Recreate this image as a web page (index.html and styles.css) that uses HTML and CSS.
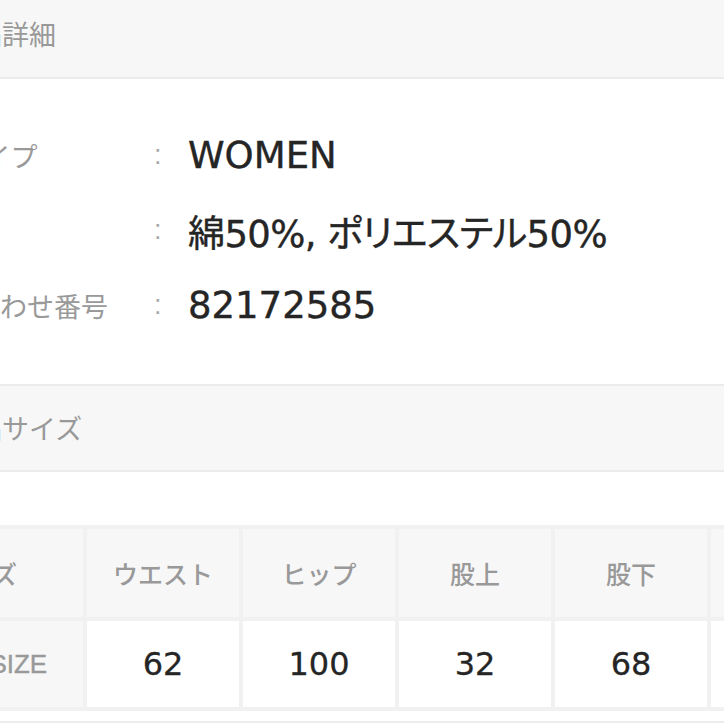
FILE: index.html
```html
<!DOCTYPE html>
<html lang="ja">
<head>
<meta charset="utf-8">
<title>商品詳細</title>
<link rel="stylesheet" href="styles.css">
</head>
<body>
<div class="page">
  <div class="sec-head sec-head--top">商品詳細</div>

  <dl class="spec">
    <div class="spec-row">
      <dt class="spec-label">ITEMタイプ</dt>
      <dd class="spec-colon">:</dd>
      <dd class="spec-value">WOMEN</dd>
    </div>
    <div class="spec-row">
      <dt class="spec-label">素材</dt>
      <dd class="spec-colon">:</dd>
      <dd class="spec-value spec-value--mixed">綿50%, ポリエステル50%</dd>
    </div>
    <div class="spec-row">
      <dt class="spec-label">お問い合わせ番号</dt>
      <dd class="spec-colon">:</dd>
      <dd class="spec-value">82172585</dd>
    </div>
  </dl>

  <div class="sec-head sec-head--boxed">商品サイズ</div>

  <table class="size-table">
    <thead>
      <tr>
        <th class="size-first">サイズ</th>
        <th>ウエスト</th>
        <th>ヒップ</th>
        <th>股上</th>
        <th>股下</th>
        <th>裾幅</th>
      </tr>
    </thead>
    <tbody>
      <tr>
        <td class="size-first size-name">FREE SIZE</td>
        <td>62</td>
        <td>100</td>
        <td>32</td>
        <td>68</td>
        <td>20</td>
      </tr>
    </tbody>
  </table>

  <div class="next-sec"></div>
</div>
</body>
</html>
```

FILE: styles.css
```css
html, body {
  margin: 0;
  padding: 0;
  background: #ffffff;
}

body {
  width: 724px;
  height: 724px;
  overflow: hidden;
  font-family: "Liberation Sans", "Noto Sans CJK JP", sans-serif;
}

.page {
  margin-left: -130px;
  width: 1000px;
}

.sec-head {
  background: #f7f7f7;
  color: #999999;
  font-family: "Noto Sans CJK JP", sans-serif;
  font-size: 27px;
  padding-left: 78px;
}

.sec-head--top {
  padding-top: 14px;
  padding-bottom: 23px;
  line-height: 40px;
  border-bottom: 2px solid #ececec;
}

.sec-head--boxed {
  margin-top: 41px;
  line-height: 84px;
  border-top: 2px solid #ececec;
  border-bottom: 2px solid #ececec;
}

.spec {
  margin: 0;
  padding: 39px 0 0 22px;
}

.spec-row {
  display: grid;
  grid-template-columns: 262px 34px 1fr;
  align-items: center;
  height: 75px;
}

.spec-label {
  color: #999999;
  font-size: 27px;
  white-space: nowrap;
}

.spec-colon {
  margin: 0;
  color: #a8a8a8;
  font-size: 27px;
}

.spec-value {
  margin: 0;
  color: #252525;
  font-family: "DejaVu Sans", "Noto Sans CJK JP", sans-serif;
  font-size: 37px;
  font-feature-settings: "palt";
  -webkit-text-stroke: 0.4px #252525;
  white-space: nowrap;
}

.spec-value--mixed {
  letter-spacing: -0.6px;
}

.size-table {
  margin-top: 53px;
  margin-left: 3px;
  border-collapse: separate;
  border-spacing: 4px;
  background: #f1f1f1;
  table-layout: fixed;
  width: 994px;
}

.size-table th,
.size-table td {
  width: 152px;
  text-align: center;
  padding: 0;
  white-space: nowrap;
}

.size-table th {
  height: 88px;
  background: #f7f7f7;
  color: #999999;
  font-family: "Noto Sans CJK JP", sans-serif;
  font-size: 25px;
  font-weight: 500;
}

.size-table td {
  height: 86px;
  background: #ffffff;
  color: #252525;
  font-family: "DejaVu Sans", sans-serif;
  font-size: 32px;
  -webkit-text-stroke: 0.3px #252525;
}

.size-table .size-first {
  width: 206px;
  background: #f7f7f7;
}

.size-table .size-name {
  color: #999999;
  font-family: "Liberation Sans", sans-serif;
  font-size: 26px;
  -webkit-text-stroke: 0.4px #999999;
}

.next-sec {
  margin-top: 10px;
  border-top: 2px solid #ececec;
  height: 40px;
}
```
